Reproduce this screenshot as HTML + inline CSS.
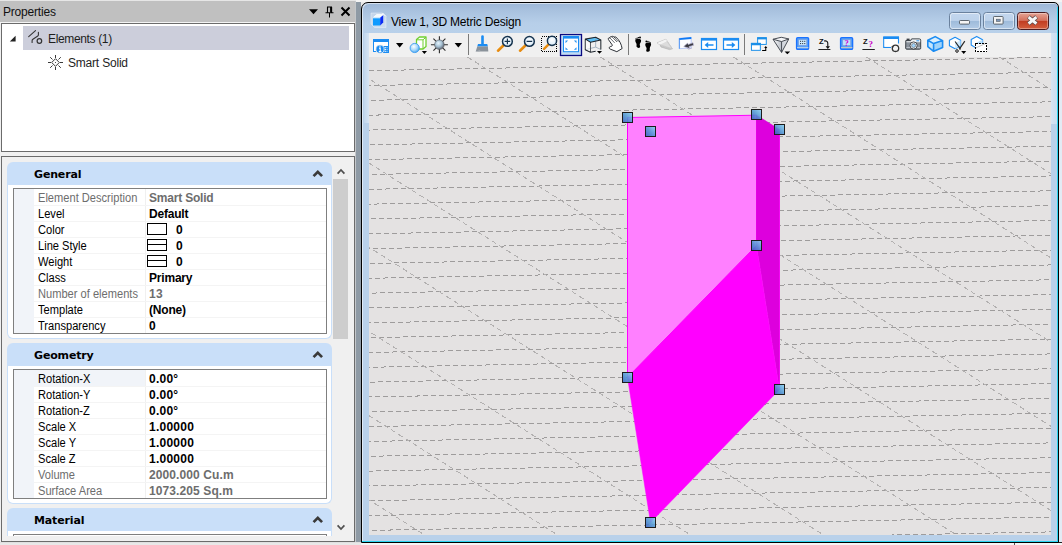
<!DOCTYPE html>
<html lang="en">
<head>
<meta charset="utf-8">
<title>Properties - View 1, 3D Metric Design</title>
<style>
html,body{margin:0;padding:0;}
body{width:1062px;height:545px;overflow:hidden;position:relative;background:#e9e9e9;font-family:"Liberation Sans",sans-serif;font-size:12px;color:#000;}
.abs{position:absolute;}
#lp{position:absolute;left:0;top:0;width:356px;height:545px;background:#f0f0f0;}
#lp-title{position:absolute;left:0;top:0;width:356px;height:22px;background:#c0c0c0;border-bottom:1px solid #f4f4f4;}
#lp-title .t{position:absolute;left:3px;top:5px;font-size:12px;letter-spacing:-0.2px;line-height:14px;color:#111;}
#tree{position:absolute;left:1px;top:23px;width:352px;height:127px;background:#fff;border:1px solid #6b6b6b;}
#tree .sel{position:absolute;left:21px;top:2px;width:326px;height:24px;background:#cccedb;}
#tree .l1{position:absolute;left:46px;top:8px;font-size:12px;letter-spacing:-0.35px;line-height:14px;color:#1e1e1e;}
#tree .l2{position:absolute;left:66px;top:32px;font-size:12px;letter-spacing:-0.2px;line-height:14px;color:#1e1e1e;}
#props{position:absolute;left:1px;top:156px;width:352px;height:384px;background:#f0f0f0;border:1px solid #6b6b6b;overflow:hidden;}
.band{position:absolute;left:5px;width:325px;}
.band .hd{position:absolute;left:0;top:0;width:325px;height:23px;background:#c9dff9;border-radius:6px 6px 0 0;}
.band .hd span{position:absolute;left:27px;top:6px;font-family:"DejaVu Sans","Liberation Sans",sans-serif;font-weight:bold;font-size:11px;line-height:13px;letter-spacing:-0.15px;color:#000;}
.band .bd{position:absolute;left:0;top:23px;width:323px;background:#fff;border:1px solid #c9dff9;border-top:none;border-radius:0 0 6px 6px;}
.grid{position:absolute;left:5px;top:3px;width:312px;background:#fff;border:1px solid #7f7f7f;}
.row{position:relative;height:16px;border-bottom:0;font-size:12px;line-height:16px;white-space:nowrap;}
.row .ind{position:absolute;left:0;top:0;width:20px;height:16px;background:#f1f4f9;}
.row .k{position:absolute;left:24px;top:1px;height:16px;color:#000;transform:scaleX(0.925);transform-origin:0 0;}
.row .v{position:absolute;left:135px;top:1px;height:16px;font-weight:bold;color:#000;letter-spacing:-0.2px;}
.row .v.d{letter-spacing:0.25px;}
.row .v.m{letter-spacing:0.1px;}
.row.ro .k,.row.ro .v{color:#6d6d6d;}
.row + .row{box-shadow:inset 0 1px 0 #f4f4f4;}
.row.hl .k{left:20px;padding-left:4.3px;width:115.5px;background:#f1f4f9;top:0;padding-top:1px;height:15px;}
.vsep{position:absolute;left:131px;top:0;bottom:0;width:1px;background:#f0f0f0;}
.sw{position:absolute;left:133px;top:2px;width:18px;height:10px;border:1px solid #000;background:#fff;}
.sw.ln:after{content:"";position:absolute;left:0;top:4px;width:18px;height:1px;background:#000;}
.row .v.n{left:162px;}
</style>
</head>
<body>
<div id="lp">
  <div id="lp-title"><span class="t">Properties</span>
    <svg class="abs" style="left:308px;top:4px" width="46" height="16" viewBox="0 0 46 16">
      <path d="M1 5.2h9l-4.5 5z" fill="#000"/>
      <path d="M19 3h5M19.5 3v5.5M23.6 3v5.5M17.5 8.7h8" stroke="#000" stroke-width="1.1" fill="none"/>
      <path d="M23 3v5.5" stroke="#000" stroke-width="1.8" fill="none"/>
      <path d="M21.5 9v4.5" stroke="#000" stroke-width="1" fill="none"/>
      <path d="M33.5 3.5l8 8M41.5 3.5l-8 8" stroke="#000" stroke-width="2" fill="none"/>
    </svg>
  </div>
  <div id="tree">
    <div class="sel"></div>
    <svg class="abs" style="left:7px;top:10.5px" width="8" height="8" viewBox="0 0 8 8"><path d="M6.6 0.8v5.8H0.8z" fill="#222"/></svg>
    <svg class="abs" style="left:25px;top:4px" width="20" height="18" viewBox="0 0 20 18">
      <path d="M1.7 8.6l6.8-6M5.1 14.4v-1.6c0-.8.2-1.2.8-1.6l4.9-3.2c.5-.3.6-.6.6-1.2V4.2" stroke="#333" stroke-width="1.1" fill="none" stroke-linecap="round"/>
      <circle cx="12.4" cy="13" r="2.3" stroke="#333" stroke-width="1.2" fill="none"/>
    </svg>
    <span class="l1">Elements (1)</span>
    <svg class="abs" style="left:46px;top:31px" width="16" height="16" viewBox="0 0 16 16">
      <path d="M7.5 0v3M7.5 12v3M0 7.5h3M12 7.5h3" stroke="#3a3a3a" stroke-width="1" fill="none"/>
      <path d="M2.2 2.2l2.3 2.3M12.8 2.2l-2.3 2.3M2.2 12.8l2.3-2.3M12.8 12.8l-2.3-2.3" stroke="#3a3a3a" stroke-width="1" fill="none"/>
      <path d="M7.5 3.7l3.8 3.8-3.8 3.8-3.8-3.8z" stroke="#3a3a3a" stroke-width="1" fill="#fff"/>
      <rect x="7" y="7" width="1" height="1" fill="#555"/>
    </svg>
    <span class="l2">Smart Solid</span>
  </div>
  <div id="props">
    <div class="band" style="top:5px;height:177px">
      <div class="hd"><span>General</span>
        <svg class="abs" style="left:305px;top:7px" width="12" height="9" viewBox="0 0 12 9"><path d="M0.6 6.2L5.8 1l5.2 5.2-1.9 1.9-3.3-3.3-3.3 3.3z" fill="#3a3a3a"/></svg>
      </div>
      <div class="bd" style="height:153px">
        <div class="grid">
          <div class="vsep"></div>
          <div class="row ro"><i class="ind"></i><span class="k">Element Description</span><span class="v">Smart Solid</span></div>
          <div class="row"><i class="ind"></i><span class="k">Level</span><span class="v">Default</span></div>
          <div class="row"><i class="ind"></i><span class="k">Color</span><i class="sw"></i><span class="v n d">0</span></div>
          <div class="row"><i class="ind"></i><span class="k">Line Style</span><i class="sw ln"></i><span class="v n d">0</span></div>
          <div class="row"><i class="ind"></i><span class="k">Weight</span><i class="sw ln"></i><span class="v n d">0</span></div>
          <div class="row"><i class="ind"></i><span class="k">Class</span><span class="v">Primary</span></div>
          <div class="row ro"><i class="ind"></i><span class="k">Number of elements</span><span class="v d">13</span></div>
          <div class="row"><i class="ind"></i><span class="k">Template</span><span class="v">(None)</span></div>
          <div class="row"><i class="ind"></i><span class="k">Transparency</span><span class="v d">0</span></div>
        </div>
      </div>
    </div>
    <div class="band" style="top:186px;height:160px">
      <div class="hd"><span>Geometry</span>
        <svg class="abs" style="left:305px;top:7px" width="12" height="9" viewBox="0 0 12 9"><path d="M0.6 6.2L5.8 1l5.2 5.2-1.9 1.9-3.3-3.3-3.3 3.3z" fill="#3a3a3a"/></svg>
      </div>
      <div class="bd" style="height:137px">
        <div class="grid">
          <div class="vsep"></div>
          <div class="row hl"><i class="ind"></i><span class="k">Rotation-X</span><span class="v d">0.00°</span></div>
          <div class="row"><i class="ind"></i><span class="k">Rotation-Y</span><span class="v d">0.00°</span></div>
          <div class="row"><i class="ind"></i><span class="k">Rotation-Z</span><span class="v d">0.00°</span></div>
          <div class="row"><i class="ind"></i><span class="k">Scale X</span><span class="v d">1.00000</span></div>
          <div class="row"><i class="ind"></i><span class="k">Scale Y</span><span class="v d">1.00000</span></div>
          <div class="row"><i class="ind"></i><span class="k">Scale Z</span><span class="v d">1.00000</span></div>
          <div class="row ro"><i class="ind"></i><span class="k">Volume</span><span class="v m">2000.000 Cu.m</span></div>
          <div class="row ro"><i class="ind"></i><span class="k">Surface Area</span><span class="v m">1073.205 Sq.m</span></div>
        </div>
      </div>
    </div>
    <div class="band" style="top:351px;height:40px">
      <div class="hd"><span>Material</span>
        <svg class="abs" style="left:305px;top:7px" width="12" height="9" viewBox="0 0 12 9"><path d="M0.6 6.2L5.8 1l5.2 5.2-1.9 1.9-3.3-3.3-3.3 3.3z" fill="#3a3a3a"/></svg>
      </div>
      <div class="bd" style="height:40px">
        <div class="grid" style="height:30px"></div>
      </div>
    </div>
    <div class="abs" style="left:0;top:379px;width:352px;height:6px;background:#f0f0f0"></div>
    <div class="abs" style="left:331px;top:0;width:21px;height:385px;background:#f0f0f0"></div>
    <div class="abs" style="left:331px;top:22px;width:15px;height:160px;background:#cdcdcd"></div>
    <svg class="abs" style="left:333px;top:10px" width="12" height="8" viewBox="0 0 12 8"><path d="M2.6 6.6l3.4-3.6 3.4 3.6" stroke="#505050" stroke-width="1.7" fill="none"/></svg>
    <svg class="abs" style="left:333px;top:367px" width="12" height="8" viewBox="0 0 12 8"><path d="M2.6 1.4l3.4 3.6 3.4-3.6" stroke="#505050" stroke-width="1.7" fill="none"/></svg>
  </div>
</div>
<div class="abs" style="left:355px;top:0;width:1px;height:545px;background:#c4c7ca"></div>
<div class="abs" style="left:356px;top:0;width:5px;height:545px;background:#8e9aa5"></div>
<div class="abs" style="left:356px;top:0;width:706px;height:2px;background:#f4f4f4"></div>
<div class="abs" style="left:0;top:0;width:356px;height:1px;background:#e6e6e6"></div>
<div class="abs" style="left:1059px;top:2px;width:3px;height:543px;background:#e3ebf4"></div>
<div class="abs" style="left:0;top:543px;width:361px;height:2px;background:#e8e8e8"></div>
<div class="abs" style="left:361px;top:543px;width:701px;height:2px;background:#f6f6f6"></div>
<div class="abs" style="left:0;top:542px;width:361px;height:1px;background:#e0e0e0"></div>
<div class="abs" style="left:1014px;top:543px;width:1px;height:2px;background:#555"></div>
<div class="abs" style="left:1058px;top:542px;width:4px;height:1px;background:#222"></div>
<div id="win" class="abs" style="left:361px;top:2px;width:696px;height:539px;border:1px solid #000;border-radius:7px 5px 0 0;background:linear-gradient(#9cb7d7 0,#a9c2df 8px,#b7cfe9 20px,#b9d1ea 31px);overflow:hidden;box-shadow:inset 1px 1px 0 rgba(255,255,255,.55)">
  <div class="abs" style="left:695px;top:4px;width:1px;height:535px;background:#2ad4f0"></div>
  <div class="abs" style="left:0;top:538px;width:696px;height:1px;background:#2ad4f0"></div>
  <div class="abs" style="left:2px;top:30px;width:5px;height:90px;background:linear-gradient(90deg,rgba(255,255,255,0.12),rgba(255,255,255,0.42))"></div>
  <div class="abs" style="left:689px;top:30px;width:6px;height:91px;background:linear-gradient(90deg,rgba(255,255,255,0.42),rgba(255,255,255,0.25))"></div>
  <svg class="abs" style="left:8px;top:9px" width="18" height="18" viewBox="370 12 18 18">
    <path d="M371 13h11.5l3.5 3.5v11h-11.5l-3.5-3.5z" fill="rgba(255,255,255,0.28)" stroke="rgba(255,255,255,0.45)" stroke-width="0.8"/>
    <path d="M382.5 13l3.3 3.3" stroke="rgba(255,255,255,0.9)" stroke-width="1"/>
    <path d="M373 17.8l3.6-3.2h6.6l-3 3.2z" fill="#f2faff" stroke="#ffffff" stroke-width="0.8" stroke-linejoin="round"/>
    <rect x="373" y="17.6" width="7.2" height="7.9" fill="#0f9bff"/>
    <path d="M380.2 17.6l3-2.4v7.2l-3 3.1z" fill="#0a2cf5"/>
    <path d="M373 17.8h7.2" stroke="#eaf6ff" stroke-width="0.9"/>
  </svg>
  <span class="abs" style="left:29px;top:12px;font-size:12px;letter-spacing:-0.19px;line-height:14px;color:#000">View 1, 3D Metric Design</span>
  <svg class="abs" style="left:586px;top:8px" width="104" height="20" viewBox="948 11 104 20">
    <defs>
      <linearGradient id="gBtn" x1="0" y1="0" x2="0" y2="1"><stop offset="0" stop-color="#c3d7ee"/><stop offset="0.47" stop-color="#bdd2eb"/><stop offset="0.48" stop-color="#9dbada"/><stop offset="1" stop-color="#b4cce7"/></linearGradient>
      <linearGradient id="gCls" x1="0" y1="0" x2="0" y2="1"><stop offset="0" stop-color="#e6a799"/><stop offset="0.47" stop-color="#d4705c"/><stop offset="0.48" stop-color="#c03a20"/><stop offset="1" stop-color="#d4603f"/></linearGradient>
    </defs>
    <rect x="949.5" y="12.5" width="31" height="17" rx="3" fill="url(#gBtn)" stroke="#6a819d" stroke-width="1"/>
    <rect x="950.5" y="13.5" width="29" height="15" rx="2" fill="none" stroke="rgba(255,255,255,0.5)" stroke-width="1"/>
    <rect x="959.5" y="20.5" width="10" height="3.6" rx="0.8" fill="#f4f4f4" stroke="#505860" stroke-width="0.9"/>
    <rect x="983.5" y="12.5" width="31" height="17" rx="3" fill="url(#gBtn)" stroke="#6a819d" stroke-width="1"/>
    <rect x="984.5" y="13.5" width="29" height="15" rx="2" fill="none" stroke="rgba(255,255,255,0.5)" stroke-width="1"/>
    <rect x="993.5" y="16.5" width="9.6" height="7.6" rx="0.8" fill="#f4f4f4" stroke="#505860" stroke-width="0.9"/>
    <rect x="996.4" y="19.2" width="3.8" height="2.2" fill="#7d96b8" stroke="#505860" stroke-width="0.6"/>
    <rect x="1017.5" y="12.5" width="31" height="17" rx="3" fill="url(#gCls)" stroke="#4a1c20" stroke-width="1"/>
    <rect x="1018.5" y="13.5" width="29" height="15" rx="2" fill="none" stroke="rgba(255,255,255,0.35)" stroke-width="1"/>
    <path d="M1028.4 16.9l8.2 6.9M1036.6 16.9l-8.2 6.9" fill="none" stroke="#5c4a4a" stroke-width="4.4"/>
    <path d="M1028.6 17.1l7.8 6.5M1036.4 17.1l-7.8 6.5" fill="none" stroke="#f6f6f6" stroke-width="3"/>
  </svg>
  <div class="abs" style="left:7px;top:30px;width:682px;height:24px;background:#f0f0f0"></div>
  <svg class="abs" style="left:7px;top:30px" width="682" height="24" viewBox="369 33 682 24">
    <defs>
      <radialGradient id="gSph" cx="0.4" cy="0.35" r="0.7"><stop offset="0" stop-color="#ffffff"/><stop offset="0.55" stop-color="#a8d8fb"/><stop offset="1" stop-color="#3fa0ee"/></radialGradient>
      <radialGradient id="gSun" cx="0.4" cy="0.35" r="0.75"><stop offset="0" stop-color="#e8f6ff"/><stop offset="0.45" stop-color="#a9c4d6"/><stop offset="1" stop-color="#4a4a55"/></radialGradient>
      <linearGradient id="gOr" x1="0" y1="0" x2="1" y2="1"><stop offset="0" stop-color="#f7a21b"/><stop offset="1" stop-color="#d97706"/></linearGradient>
      <radialGradient id="gLens" cx="0.5" cy="0.4" r="0.7"><stop offset="0" stop-color="#ffffff"/><stop offset="1" stop-color="#cfe6f8"/></radialGradient>
    </defs>
    <!-- 1 view attributes -->
    <g>
      <rect x="373.5" y="39.5" width="15" height="12" fill="#fff" stroke="#1b8cf2" stroke-width="1"/>
      <rect x="373" y="39" width="16" height="3" fill="#1b8cf2"/>
      <rect x="383" y="46" width="6" height="7" fill="#1b8cf2"/>
      <path d="M384.5 47.7h3M384.5 49.5h3M384.5 51.3h3" stroke="#fff" stroke-width="0.9"/>
      <path d="M386.7 47.2v4.6" stroke="#1b8cf2" stroke-width="0.9"/>
      <circle cx="380" cy="49.2" r="4.1" fill="#1b8cf2" stroke="#f0f0f0" stroke-width="0.8"/>
      <path d="M380 46.2v1.3M379 48.3h1.2v3M378.8 51.6h2.6" stroke="#fff" stroke-width="1.1" fill="none"/>
    </g>
    <path d="M396 43h7.4l-3.7 4.4z" fill="#000"/>
    <!-- 2 display style -->
    <g>
      <path d="M416.5 39.5l3-2.5h6.5v9.5l-3 2.5h-6.5z" fill="#fff" stroke="#6fcf2f" stroke-width="1.3" stroke-linejoin="round"/>
      <path d="M423 39.8v9M416.8 39.8h6.2l2.8-2.4" fill="none" stroke="#6fcf2f" stroke-width="1"/>
      <circle cx="414.7" cy="48" r="4.6" fill="url(#gSph)" stroke="#3d9df0" stroke-width="0.9"/>
      <path d="M421.8 51h5.2l-2.6 3z" fill="#000"/>
    </g>
    <!-- 3 brightness -->
    <g>
      <path d="M439.4 36.2v17M430.9 44.7h17M433.4 38.7l12 12M445.4 38.7l-12 12" stroke="#2b2b2b" stroke-width="1.1"/>
      <circle cx="439.4" cy="44.7" r="4.8" fill="url(#gSun)" stroke="#50555c" stroke-width="0.6"/>
    </g>
    <path d="M454.6 43h7.4l-3.7 4.4z" fill="#000"/>
    <rect x="468" y="34" width="1" height="21" fill="#7a7a7a"/>
    <!-- brush -->
    <g>
      <path d="M481.2 36.6a1.3 1.3 0 0 1 2.6 0v7.4h-2.6z" fill="#1b8cf2"/>
      <path d="M478 44h9.2l0.8 2.6h-10.8z" fill="#1b8cf2"/>
      <path d="M477.3 46.6h10.6l0.4 4.9h-12.6z" fill="#8a929a"/>
      <path d="M475.5 51.5h4l1-1.6" fill="#aab0b6"/>
    </g>
    <!-- zoom in -->
    <g>
      <path d="M503.6 45.3l-5.6 5.4" stroke="url(#gOr)" stroke-width="2.6" stroke-linecap="round"/>
      <circle cx="507.4" cy="41.4" r="4.9" fill="url(#gLens)" stroke="#17344f" stroke-width="1.5"/>
      <path d="M504.6 41.4h5.6M507.4 38.6v5.6" stroke="#17344f" stroke-width="1.2"/>
    </g>
    <!-- zoom out -->
    <g>
      <path d="M525.6 45.3l-5.6 5.4" stroke="url(#gOr)" stroke-width="2.6" stroke-linecap="round"/>
      <circle cx="529.4" cy="41.4" r="4.9" fill="url(#gLens)" stroke="#17344f" stroke-width="1.5"/>
      <path d="M526.6 41.4h5.6" stroke="#17344f" stroke-width="1.3"/>
    </g>
    <!-- window area -->
    <g>
      <rect x="541.5" y="36.5" width="15" height="15" fill="none" stroke="#000" stroke-width="1" stroke-dasharray="1 1" shape-rendering="crispEdges"/>
      <path d="M548.6 44.3l-4.6 4.6" stroke="url(#gOr)" stroke-width="2.4" stroke-linecap="round"/>
      <circle cx="552" cy="40.8" r="4.6" fill="url(#gLens)" stroke="#17344f" stroke-width="1.5"/>
    </g>
    <!-- fit view (active) -->
    <g>
      <rect x="560.5" y="34.5" width="21" height="21" fill="#c2dcf5" stroke="#0a0a82" stroke-width="1.3"/>
      <rect x="563.5" y="36.5" width="15" height="15.2" fill="#fff" stroke="#1b8cf2" stroke-width="1"/>
      <rect x="563" y="36" width="16" height="2.6" fill="#1b8cf2"/>
      <path d="M565.5 40.6h2.6l-2.6 2.6zM576.5 40.6h-2.6l2.6 2.6zM565.5 49.8h2.6l-2.6-2.6zM576.5 49.8h-2.6l2.6-2.6z" fill="#2a93f0"/>
    </g>
    <!-- rotate view cube -->
    <g transform="translate(582,33) scale(0.04708)">
      <path d="M70 130L290 90 400 150 180 195z" fill="#5cc0f8"/>
      <path d="M290 95v205L70 355M290 300l110 50" fill="none" stroke="#8fa3b5" stroke-width="16"/>
      <path d="M70 130L290 90 400 150 180 195zM70 130v225l110 55 110-20M180 195v215M400 150v200" fill="none" stroke="#1f262e" stroke-width="22" stroke-linejoin="round"/>
      <path d="M180 215v180L80 347V150z" fill="#fff" opacity="0.55"/>
      <path d="M318 383h108l-54 58z" fill="#000"/>
    </g>
    <!-- pan hand -->
    <g transform="translate(582,33) scale(0.04708)">
      <path d="M600 290C572 298 568 332 600 342L740 397 852 330C835 235 795 150 718 85 700 70 680 80 690 95 670 70 640 60 638 82 610 70 585 85 592 105 565 95 548 120 562 140L640 250C652 280 625 285 600 290z" fill="#fff" stroke="#20242a" stroke-width="20" stroke-linejoin="round"/>
      <path d="M600 112l88 92M645 90l92 95M695 100l70 78" fill="none" stroke="#20242a" stroke-width="14" stroke-linecap="round"/>
    </g>
    <rect x="628" y="34" width="1" height="21" fill="#7a7a7a"/>
    <!-- walk -->
    <g transform="translate(630,33) scale(0.06592)" fill="#000">
      <path d="M80 120C76 98 100 86 128 86 158 86 172 102 168 124 164 144 148 154 148 174 148 192 158 202 152 216 144 230 110 230 102 214 94 198 104 178 98 162 92 146 84 138 80 120z"/>
      <circle cx="90" cy="90" r="10"/><circle cx="108" cy="78" r="10"/><circle cx="128" cy="70" r="11"/><circle cx="152" cy="68" r="14"/>
      <path d="M320 180C324 158 300 146 272 146 242 146 228 162 232 184 236 204 252 214 252 234 252 252 242 262 248 276 256 290 290 290 298 274 306 258 296 238 302 222 308 206 316 198 320 180z"/>
      <circle cx="310" cy="150" r="10"/><circle cx="292" cy="138" r="10"/><circle cx="272" cy="130" r="11"/><circle cx="248" cy="128" r="14"/>
    </g>
    <!-- fly -->
    <g transform="translate(630,33) scale(0.06592)">
      <path d="M410 150L545 95 642 240 600 252 470 212 455 178z" fill="#c9c9c9" stroke="#b0b0b0" stroke-width="10" stroke-linejoin="round"/>
      <path d="M410 150L545 95 642 240 455 178z" fill="#f3f3f3"/>
      <path d="M455 178L560 125 642 240z" fill="#dcdcdc"/>
      <path d="M455 178L642 240M560 125L642 240" fill="none" stroke="#b9b9b9" stroke-width="8"/>
    </g>
    <!-- navigate -->
    <g transform="translate(630,33) scale(0.06592)">
      <path d="M752 82L928 66v160L752 238z" fill="#fdfdff" stroke="#9db4f5" stroke-width="10"/>
      <path d="M748 80L930 62v28L748 106z" fill="#0f7af5"/>
      <path d="M748 80v160" stroke="#2f86f5" stroke-width="12"/>
      <path d="M815 205l60-52 8 22 72-28 10 38-70 22 12 28z" fill="#3a3a40" stroke="#b8b4d4" stroke-width="10" stroke-linejoin="round"/>
      <path d="M850 215l40 30 50-18" fill="none" stroke="#b4b0cc" stroke-width="14"/>
    </g>
    <!-- view previous / next -->
    <g>
      <rect x="701.5" y="38.5" width="15" height="11" fill="#fff" stroke="#1b8cf2" stroke-width="1.2"/>
      <rect x="701" y="38" width="16" height="2.6" fill="#1b8cf2"/>
      <path d="M713.5 45h-6" stroke="#1b8cf2" stroke-width="1.7"/><path d="M704.6 45l3.6-3v6z" fill="#1b8cf2"/>
      <rect x="723.5" y="38.5" width="15" height="11" fill="#fff" stroke="#1b8cf2" stroke-width="1.2"/>
      <rect x="723" y="38" width="16" height="2.6" fill="#1b8cf2"/>
      <path d="M726.5 45h6" stroke="#1b8cf2" stroke-width="1.7"/><path d="M735.4 45l-3.6-3v6z" fill="#1b8cf2"/>
    </g>
    <rect x="744" y="34" width="1" height="21" fill="#7a7a7a"/>
    <!-- copy view -->
    <g transform="translate(744,33) scale(0.06592)">
      <rect x="207" y="72" width="131" height="101" fill="#fff" stroke="#1a8fe8" stroke-width="15"/>
      <rect x="200" y="65" width="145" height="32" fill="#1a8fe8"/>
      <rect x="113" y="158" width="135" height="105" fill="#fff" stroke="#1a8fe8" stroke-width="15"/>
      <rect x="105" y="150" width="150" height="36" fill="#1a8fe8"/>
      <path d="M275 264h55v-45" fill="none" stroke="#000" stroke-width="16"/>
      <path d="M306 228l24-32 24 32z" fill="#000"/>
    </g>
    <!-- perspective -->
    <g transform="translate(744,33) scale(0.06592)">
      <defs><linearGradient id="gPv" x1="0" y1="0" x2="1" y2="0"><stop offset="0" stop-color="#ffffff"/><stop offset="1" stop-color="#b9bec6"/></linearGradient></defs>
      <path d="M440 95L570 130v165z" fill="url(#gPv)"/>
      <path d="M680 90L570 130v165z" fill="#d5d9df"/>
      <path d="M440 95L565 65 680 90 570 130z" fill="#f4f5f7"/>
      <path d="M440 95L565 65 680 90 570 130zM440 95l130 200L680 90M570 130v165" fill="none" stroke="#454a52" stroke-width="15" stroke-linejoin="round"/>
      <path d="M615 280h86l-43 42z" fill="#000"/>
    </g>
    <!-- display depth monitor -->
    <g id="mon1">
      <rect x="796.6" y="37.6" width="12" height="11.8" rx="1.2" fill="#5aa2f4" stroke="#1a72ff" stroke-width="1.4"/>
      <rect x="798.8" y="39.8" width="7.8" height="5.4" fill="#cdeafc" stroke="#7f95d8" stroke-width="0.5"/>
      <path d="M797 47.6h11.4" stroke="#c9d6e6" stroke-width="0.9"/>
      <g fill="#3a4450"><rect x="800" y="40.8" width="1.1" height="1.1"/><rect x="802.1" y="40.8" width="1.1" height="1.1"/><rect x="804.2" y="40.8" width="1.1" height="1.1"/><rect x="800" y="43" width="1.1" height="1.1"/><rect x="802.1" y="43" width="1.1" height="1.1"/><rect x="804.2" y="43" width="1.1" height="1.1"/></g>
    </g>
    <!-- set active depth -->
    <g>
      <text x="818.9" y="43.7" font-family="Liberation Sans, sans-serif" font-weight="bold" font-size="7.6" fill="#111">Z</text>
      <path d="M824 41c2.8-.6 3.8.8 3.8 2.6v3.2" fill="none" stroke="#111" stroke-width="1.1"/>
      <path d="M825.6 46.2h4.4l-2.2 2.8z" fill="#111"/>
      <path d="M818.4 49.5h12" stroke="#222" stroke-width="1"/>
    </g>
    <!-- show display depth -->
    <g>
      <rect x="840.6" y="37.6" width="12" height="11.8" rx="1.2" fill="#5aa2f4" stroke="#1a72ff" stroke-width="1.4"/>
      <rect x="842.8" y="39.8" width="7.8" height="5.6" fill="#bfe4fb" stroke="#7f95d8" stroke-width="0.5"/>
      <path d="M841 47.6h11.4" stroke="#d9cdb8" stroke-width="0.9"/>
      <text x="844.6" y="46.3" font-family="Liberation Serif, serif" font-weight="bold" font-size="8.6" fill="#d400d4">?</text>
    </g>
    <!-- show active depth -->
    <g>
      <text x="862.9" y="43.7" font-family="Liberation Sans, sans-serif" font-weight="bold" font-size="7.6" fill="#111">Z</text>
      <text x="868.6" y="47.4" font-family="Liberation Serif, serif" font-weight="bold" font-size="9" fill="#c800c8">?</text>
      <path d="M862.4 49.5h12.4" stroke="#222" stroke-width="1"/>
    </g>
    <!-- view w/ circle -->
    <g>
      <path d="M883.8 37v10.4h7.2M898.4 37v6.6" fill="none" stroke="#1b8cf2" stroke-width="1.3"/>
      <rect x="884.4" y="38.8" width="13.4" height="8" fill="#fff"/>
      <rect x="883.2" y="36.3" width="15.8" height="2.7" fill="#1b8cf2"/>
      <circle cx="895.5" cy="48.3" r="3.2" fill="#f4f4f4" stroke="#333" stroke-width="1.3"/>
      <path d="M891.2 46.6l1.6 1.6 1.2-1.9z" fill="#333"/>
    </g>
    <!-- camera -->
    <g>
      <rect x="906.6" y="38.6" width="3" height="2" fill="#3b4046"/>
      <path d="M905.8 40.6h4.6l1.2-1.7h7.8a1.3 1.3 0 0 1 1.3 1.3v8a1 1 0 0 1-1 1h-13a1 1 0 0 1-1-1z" fill="#8a929b" stroke="#3b4046" stroke-width="1"/>
      <path d="M906.4 41.2h4.4l1.2-1.7h7.4a.8.8 0 0 1 .8.8v2h-13.8z" fill="#f1f3f5"/>
      <path d="M906.4 47.6h13.8" stroke="#c9ced4" stroke-width="0.8"/>
      <path d="M916.4 40.8h2.8" stroke="#1b8cf2" stroke-width="0.9"/>
      <circle cx="913.6" cy="45.5" r="3.6" fill="#f2f4f6" stroke="#3b4046" stroke-width="0.9"/>
      <circle cx="913.6" cy="45.5" r="2" fill="#9fd4fb" stroke="#6b7784" stroke-width="0.7"/>
    </g>
    <!-- blue cube -->
    <g>
      <path d="M935.2 36.6l7.4 4v6.9l-9 3.8-5.8-4.7v-6.3z" fill="#d9effe"/>
      <path d="M933.6 43.6l9-3v6.9l-9 3.8z" fill="#9fd3fa"/>
      <path d="M927.8 40.3l5.8 3.3v7.7l-5.8-4.7z" fill="#c4e5fc"/>
      <path d="M935.2 36.6l7.4 4v6.9l-9 3.8-5.8-4.7v-6.3zM927.8 40.3l5.8 3.3 9-3M933.6 43.6v7.7" fill="none" stroke="#1b8cf2" stroke-width="1.6" stroke-linejoin="round"/>
    </g>
    <!-- cube + scissors -->
    <g>
      <path d="M955.1 37.2l5.5 3v5.5l-5.5 3-5.7-3v-5.5z" fill="#fff" stroke="#1b8cf2" stroke-width="1.1" stroke-linejoin="round"/>
      <path d="M955.1 43.2l5.5-3v5.5l-5.5 3z" fill="#cfe9fc"/>
      <path d="M955.1 41.5l5.6 7.8M964.8 41.1l-5.6 8.2" stroke="#2a2a2a" stroke-width="1.2"/>
      <circle cx="957" cy="51" r="1.3" fill="none" stroke="#000" stroke-width="0.9"/>
      <path d="M961.2 51.1h5l-2.5 2.8z" fill="#000"/>
    </g>
    <!-- cube + dotted rect -->
    <g>
      <path d="M976.7 36.4l5.9 3.4v5.4l-5.9 3.2-5.5-3.4v-5.6z" fill="#fff" stroke="#1b8cf2" stroke-width="1.1" stroke-linejoin="round"/>
      <path d="M976.7 42.6l5.9-2.8v5.4l-5.9 3.2z" fill="#bfe2fb"/>
      <rect x="975.5" y="43.5" width="11" height="8" fill="#fff" stroke="#000" stroke-width="1" stroke-dasharray="2 1" shape-rendering="crispEdges"/>
      <path d="M976 47.8l9-4" stroke="#9a9a9a" stroke-width="0.6"/>
    </g>
  </svg>
<svg class="abs" style="left:7px;top:54px" width="682" height="478" viewBox="369 57 682 478">
<rect x="369" y="57" width="682" height="478" fill="#e4e2e2"/>
<g stroke="#9e9c9c" stroke-width="1" stroke-dasharray="5 3" shape-rendering="crispEdges" fill="none">
<path d="M369 55.87L1051 42.50" stroke-dashoffset="5"/>
<path d="M369 70.70L1051 57.33" stroke-dashoffset="0"/>
<path d="M369 85.53L1051 72.16" stroke-dashoffset="3"/>
<path d="M369 100.36L1051 86.99" stroke-dashoffset="6"/>
<path d="M369 115.19L1051 101.82" stroke-dashoffset="1"/>
<path d="M369 130.02L1051 116.65" stroke-dashoffset="4"/>
<path d="M369 144.85L1051 131.48" stroke-dashoffset="7"/>
<path d="M369 159.68L1051 146.31" stroke-dashoffset="2"/>
<path d="M369 174.51L1051 161.14" stroke-dashoffset="5"/>
<path d="M369 189.34L1051 175.97" stroke-dashoffset="0"/>
<path d="M369 204.17L1051 190.80" stroke-dashoffset="3"/>
<path d="M369 219.00L1051 205.63" stroke-dashoffset="6"/>
<path d="M369 233.83L1051 220.46" stroke-dashoffset="1"/>
<path d="M369 248.66L1051 235.29" stroke-dashoffset="4"/>
<path d="M369 263.49L1051 250.12" stroke-dashoffset="7"/>
<path d="M369 278.32L1051 264.95" stroke-dashoffset="2"/>
<path d="M369 293.15L1051 279.78" stroke-dashoffset="5"/>
<path d="M369 307.98L1051 294.61" stroke-dashoffset="0"/>
<path d="M369 322.81L1051 309.44" stroke-dashoffset="3"/>
<path d="M369 337.64L1051 324.27" stroke-dashoffset="6"/>
<path d="M369 352.47L1051 339.10" stroke-dashoffset="1"/>
<path d="M369 367.30L1051 353.93" stroke-dashoffset="4"/>
<path d="M369 382.13L1051 368.76" stroke-dashoffset="7"/>
<path d="M369 396.96L1051 383.59" stroke-dashoffset="2"/>
<path d="M369 411.79L1051 398.42" stroke-dashoffset="5"/>
<path d="M369 426.62L1051 413.25" stroke-dashoffset="0"/>
<path d="M369 441.45L1051 428.08" stroke-dashoffset="3"/>
<path d="M369 456.28L1051 442.91" stroke-dashoffset="6"/>
<path d="M369 471.11L1051 457.74" stroke-dashoffset="1"/>
<path d="M369 485.94L1051 472.57" stroke-dashoffset="4"/>
<path d="M369 500.77L1051 487.40" stroke-dashoffset="7"/>
<path d="M369 515.60L1051 502.23" stroke-dashoffset="2"/>
<path d="M369 530.43L1051 517.06" stroke-dashoffset="5"/>
<path d="M369 545.26L1051 531.89" stroke-dashoffset="0"/>
<path d="M369 560.09L1051 546.72" stroke-dashoffset="3"/>
</g>
<g stroke="#b2b0b0" stroke-width="1" stroke-dasharray="5 3.6" shape-rendering="crispEdges" fill="none">
<path d="M-995.5 57L-240.4 535"/>
<path d="M-862.5 57L-107.4 535"/>
<path d="M-729.5 57L25.6 535"/>
<path d="M-596.5 57L158.6 535"/>
<path d="M-463.5 57L291.6 535"/>
<path d="M-330.5 57L424.6 535"/>
<path d="M-197.5 57L557.6 535"/>
<path d="M-64.5 57L690.6 535"/>
<path d="M68.5 57L823.6 535"/>
<path d="M201.5 57L956.6 535"/>
<path d="M334.5 57L1089.6 535"/>
<path d="M467.5 57L1222.6 535"/>
<path d="M600.5 57L1355.6 535"/>
<path d="M733.5 57L1488.6 535"/>
<path d="M866.5 57L1621.6 535"/>
<path d="M999.5 57L1754.6 535"/>
</g>
<polygon points="627.5,117.5 756.5,115.2 756.5,245.5 627.5,377.5" fill="#ff80ff" stroke="#ff00ff" stroke-width="1"/>
<polygon points="756.5,115.2 779.5,129.5 779.5,389.5 756.5,245.5" fill="#dd00dd" stroke="#dd00dd" stroke-width="0.5"/>
<polygon points="756.5,245.5 779.5,389.5 650.5,522.5 627.5,377.5" fill="#ff00ff" stroke="#ff00ff" stroke-width="0.5"/>
<path d="M779.5 133.5L779.5 389.5" stroke="#f408f4" stroke-width="1" fill="none"/>
<defs><linearGradient id="hg" x1="1" y1="0" x2="0" y2="1"><stop offset="0" stop-color="#8fd6f4" stop-opacity="0.92"/><stop offset="0.55" stop-color="#4f93d2" stop-opacity="0.88"/><stop offset="1" stop-color="#2f5cc4" stop-opacity="0.85"/></linearGradient></defs>
<rect x="622.5" y="112.5" width="10" height="10" fill="url(#hg)" stroke="#1c1c1c" stroke-width="1"/>
<rect x="751.5" y="109.5" width="10" height="10" fill="url(#hg)" stroke="#1c1c1c" stroke-width="1"/>
<rect x="774.5" y="124.5" width="10" height="10" fill="url(#hg)" stroke="#1c1c1c" stroke-width="1"/>
<rect x="645.5" y="126.5" width="10" height="10" fill="url(#hg)" stroke="#1c1c1c" stroke-width="1"/>
<rect x="751.5" y="240.5" width="10" height="10" fill="url(#hg)" stroke="#1c1c1c" stroke-width="1"/>
<rect x="622.5" y="372.5" width="10" height="10" fill="url(#hg)" stroke="#1c1c1c" stroke-width="1"/>
<rect x="774.5" y="384.5" width="10" height="10" fill="url(#hg)" stroke="#1c1c1c" stroke-width="1"/>
<rect x="645.5" y="517.5" width="10" height="10" fill="url(#hg)" stroke="#1c1c1c" stroke-width="1"/>
</svg>
</div>
</body>
</html>
